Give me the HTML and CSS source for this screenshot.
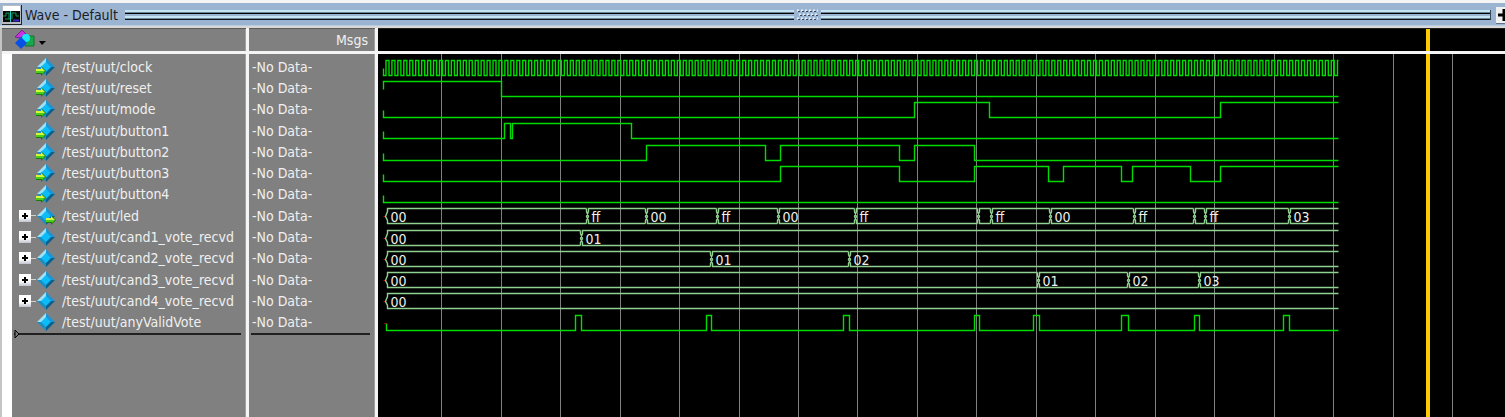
FILE: index.html
```html
<!DOCTYPE html>
<html lang="en">
<head>
<meta charset="utf-8">
<title>Wave - Default</title>
<link rel="stylesheet" href="styles.css">
</head>
<body>
<svg class="defs" aria-hidden="true">
  <symbol id="diamond" viewBox="0 0 20 20">
    <path d="M10 1 1 10 6 10 10 6z" fill="#9be2f6"/>
    <path d="M10 1 19 10 14 10 10 6z" fill="#1c93d2"/>
    <path d="M1 10 10 19 10 14 6 10z" fill="#1b8fc4"/>
    <path d="M19 10 10 19 10 14 14 10z" fill="#07618f"/>
    <path d="M10 5 15 10 10 15 5 10z" fill="#0cbcf8"/>
  </symbol>
  <symbol id="arrow" viewBox="0 0 10 10">
    <path d="M0 3H5V0L10 5 5 10V8H0z" fill="#1c7a14"/>
    <path d="M0 3H5V1L9 5H0z" fill="#d4f83c"/>
    <path d="M0 5H9L6 8V7H0z" fill="#50cc1c"/>
  </symbol>
</svg>

<header class="titlebar">
  <svg class="app-icon" viewBox="0 0 20 20" aria-hidden="true">
    <path d="M0 0H20V20H0z" fill="#222"/>
    <path d="M0 0H19V19H0z" fill="#b8bcc0"/>
    <path d="M1 1H18V6H1z" fill="#fff"/>
    <path d="M1 6H18V17H1z" fill="#050a08"/>
    <path d="M1 11H4V8H7V14M10 14V8H14V11H17M3 14H8" fill="none" stroke="#0a9a50"/>
    <path d="M8.500 6V17" stroke="#20c8c8"/>
    <path d="M11 15.500H17" stroke="#3828c8" stroke-width="2"/>
  </svg>
  <h1 class="title">Wave - Default</h1>
  <span class="groove"></span>
  <svg class="grip" viewBox="0 0 24 12" aria-hidden="true">
    <path d="M2 1.500H23M4 5.500H25M2 9.500H23" stroke="#e4f0f8" stroke-width="2" stroke-dasharray="2 2"/>
    <path d="M3 2.500H23M5 6.500H25M3 10.500H22" stroke="#3c4a5c" stroke-dasharray="2 2"/>
  </svg>
  <span class="groove groove-end"></span>
  <button class="dock" aria-label="Dock window">
    <svg class="dock-icon" viewBox="0 0 14 14" aria-hidden="true"><path d="M1 7H13M7 1V13" stroke="#000" stroke-width="3"/></svg>
  </button>
</header>

<main class="panes">
  <section class="pane names">
    <div class="head">
      <button class="filter" aria-label="Object type filter">
        <svg class="filter-icon" viewBox="0 0 32 20" aria-hidden="true">
          <path d="M1 7 8 0 13 5 6 8z" fill="#c832e0" stroke="#7a1c96"/>
          <path d="M11 6H20V16H11z" fill="#18a848" stroke="#0c7430"/>
          <circle cx="12" cy="8" r="4" fill="#14e8f4"/>
          <path d="M7 7 13 13 7 19 1 13z" fill="#0850e8"/>
          <path d="M25 11H32L28 15z" fill="#000"/>
        </svg>
      </button>
    </div>
    <div class="body">
      <ul class="rows" id="names"></ul>
      <div class="insert"><svg class="marker" viewBox="0 0 6 10" aria-hidden="true"><path d="M1 1 5 5 1 9z" fill="#777" stroke="#000"/></svg></div>
    </div>
  </section>
  <section class="pane msgs">
    <div class="head">Msgs</div>
    <div class="body">
      <ul class="rows" id="values"></ul>
      <div class="insert"></div>
    </div>
  </section>
  <section class="pane waves">
    <div class="head"><svg class="plot" id="ruler" aria-hidden="true"></svg></div>
    <div class="body"><svg class="plot" id="plot" role="img" aria-label="Signal waveforms"></svg></div>
  </section>
</main>
<script src="wave.js"></script>
</body>
</html>
```
FILE: styles.css
```css
* { box-sizing: border-box; }

body {
  margin: 0;
  min-height: 100vh;
  display: flex;
  flex-direction: column;
  overflow: hidden;
  background: #808080;
  color: #f0f0f0;
  font: 14px/16px "DejaVu Sans Condensed", Tahoma, "DejaVu Sans", sans-serif;
}

button { margin: 0; padding: 0; border: 0; background: none; display: flex; }

.defs { display: none; }

.titlebar {
  display: flex;
  align-items: center;
  height: 28px;
  padding-left: 2px;
  background: #9ab4d2;
  border-top: 3px solid #f4f4f4;
  border-bottom: 2px solid #d8d8d8;
  box-shadow: inset 0 -1px #b8cce0;
  overflow: hidden;
}

.app-icon { width: 20px; height: 20px; flex: none; }

.title {
  margin: 0 7px 0 3px;
  color: #1c1c24;
  font-size: 14px;
  font-weight: normal;
  white-space: nowrap;
}

.groove {
  flex: 1;
  height: 10px;
  background: linear-gradient(#c4e4f4 0 2px, #6c8498 2px 3px, #000 3px 4px, #9ab4d2 4px 6px, #c4e4f4 6px 8px, #6c8498 8px 9px, #101418 9px);
}
.groove-end { border-right: 1px solid #34465a; }

.grip { width: 24px; height: 12px; margin: 0 2px 0 1px; flex: none; }

.dock {
  width: 16px;
  height: 16px;
  margin: 0 -7px 0 5px;
  align-items: center;
  justify-content: center;
  flex: none;
  background: #f0f0f0;
  box-shadow: 0 1px #60708a;
}

.dock-icon { width: 14px; height: 14px; }

.panes { flex: 1; display: grid; grid-template-columns: 249px 129px 1fr; }

.pane { display: flex; flex-direction: column; min-width: 0; }

.names, .msgs { border-right: 3px solid #f4f4f4; box-shadow: inset -1px 0 #a0a0a0; }
.names { border-left: 2px solid #c4c4c4; }
.waves { background: #000; }

.head {
  display: flex;
  align-items: center;
  height: 26px;
  border-top: 1px solid #5c5c5c;
  border-bottom: 3px solid #f4f4f4;
}

.names .head { padding-left: 12px; }
.msgs .head { justify-content: flex-end; padding-right: 7px; }
.waves .head { border-top-color: #202020; }

.filter-icon { width: 32px; height: 20px; }

.body { flex: 1; padding-top: 2px; }
.names .body { border-left: 10px solid #fff; }
.waves .body { padding-top: 0; display: flex; }

.rows {
  height: 277px;
  margin: 0;
  padding: 0;
  list-style: none;
  display: grid;
  grid-template-rows: repeat(13, 1fr);
}

.row { display: flex; align-items: center; white-space: nowrap; min-height: 0; }
.msgs .row { padding-left: 3px; }

.tree { display: flex; align-items: center; width: 24px; padding-left: 7px; }

.expand {
  width: 12px;
  height: 12px;
  align-items: center;
  justify-content: center;
  background: linear-gradient(#fff 0 60%, #c0c4d0);
}

.expand-icon { width: 8px; height: 8px; }
.branch { flex: 1; height: 1px; background: #d0d0d0; }

.kind { width: 20px; height: 20px; margin-right: 6px; flex: none; }

.insert { display: flex; align-items: center; height: 2px; background: #202020; margin: 0 5px 0 2px; }
.marker { width: 6px; height: 10px; flex: none; }

.plot { display: block; width: 100%; height: 100%; min-height: 22px; flex: 1; }

.grid { stroke: #808080; }
.trace { fill: none; stroke: #00dc00; stroke-width: 1.4; }
.bus { fill: none; stroke: #90d090; stroke-width: 1.4; }
.unknown { stroke: #c80000; }
.bus-value { fill: #f0f0e8; }
.cursor { stroke: #fccc00; stroke-width: 4px; }
```
FILE: wave.js
```js
// Times are pixels after the start of the run; each signal lists its edges.
const ORIGIN = 6;
const END = 955;
const GRID_STEP = 59.45;
const PITCH = 21.25;
const TOP = 6;
const SWING = 15;
const CURSOR = 1050;

const clockEdges = [];
for (let i = 0; i < 160; i++) {
  clockEdges.push(2.5 + i * 5.945, 5.5 + i * 5.945);
}
clockEdges.push(954);

const signals = [
  { name: 'clock', port: 'in', edges: clockEdges },
  { name: 'reset', port: 'in', high: true, edges: [118] },
  { name: 'mode', port: 'in', edges: [531, 606, 837] },
  { name: 'button1', port: 'in', edges: [121, 127, 129, 248] },
  { name: 'button2', port: 'in', edges: [263, 382, 397, 516, 531, 591] },
  { name: 'button3', port: 'in', edges: [397, 516, 591, 665, 680, 738, 749, 807, 837] },
  { name: 'button4', port: 'in', edges: [] },
  { name: 'led', port: 'out', bus: [[3, '00'], [204, 'ff'], [263, '00'], [334, 'ff'], [395, '00'], [472, 'ff'], [595, ''], [608, 'ff'], [667, '00'], [751, 'ff'], [811, ''], [822, 'ff'], [906, '03']] },
  { name: 'cand1_vote_recvd', bus: [[3, '00'], [198, '01']] },
  { name: 'cand2_vote_recvd', bus: [[3, '00'], [328, '01'], [466, '02']] },
  { name: 'cand3_vote_recvd', bus: [[3, '00'], [655, '01'], [745, '02'], [816, '03']] },
  { name: 'cand4_vote_recvd', bus: [[3, '00']] },
  { name: 'anyValidVote', start: 3, edges: [192, 198, 323, 328, 460, 466, 591, 596, 650, 656, 738, 745, 811, 816, 900, 906] },
];

const plot = document.getElementById('plot');

function draw(parent, tag, attrs, text) {
  const el = document.createElementNS('http://www.w3.org/2000/svg', tag);
  for (const key in attrs) el.setAttribute(key, attrs[key]);
  if (text) el.textContent = text;
  parent.appendChild(el);
}

const px = (t) => ORIGIN + t - 0.5;

function drawTrace(s, top) {
  const bottom = top + SWING;
  let high = !!s.high;
  const start = px(s.start || 0);
  let d = `M${start} ${top + 8}V${high ? top : bottom}`;
  for (const t of s.edges) {
    high = !high;
    d += `H${px(t)}V${high ? top : bottom}`;
  }
  draw(plot, 'path', { class: 'trace', d: d + `H${px(END)}` });
  if (s.start) draw(plot, 'path', { class: 'unknown', d: `M${px(1)} ${top + 8}h2` });
}

function drawBus(s, top) {
  const bottom = top + SWING;
  const mid = top + 8;
  draw(plot, 'path', { class: 'unknown', d: `M${px(0)} ${mid}h2` });
  let d = '';
  s.bus.forEach(([t, value], i) => {
    const x = px(t);
    const next = s.bus[i + 1];
    const end = next ? px(next[0]) - 1 : px(END);
    d += `M${end} ${top}H${x + 1}V${top + 3}L${x - 1} ${mid}L${x + 1} ${bottom - 3}V${bottom}H${end}`;
    if (next) d += `M${end} ${top}V${top + 3}L${end + 2} ${mid}L${end} ${bottom - 3}V${bottom}`;
    draw(plot, 'text', { class: 'bus-value', x: x + 4, y: top + 13 }, value);
  });
  draw(plot, 'path', { class: 'bus', d });
}

for (let i = 0; i < 40; i++) {
  const x = Math.round(63.3 + i * GRID_STEP) + 0.5;
  draw(plot, 'line', { class: 'grid', x1: x, x2: x, y1: 0, y2: '100%' });
}

signals.forEach((s, i) => {
  const top = Math.floor(TOP + i * PITCH) + 0.5;
  if (s.bus) drawBus(s, top);
  else drawTrace(s, top);

  const row = document.createElement('li');
  row.className = 'row';
  const expand = s.bus
    ? `<button class="expand" aria-label="Expand ${s.name}"><svg class="expand-icon" viewBox="0 0 8 8"><path d="M1 4H7M4 1V7" stroke="#000" stroke-width="2"/></svg></button><span class="branch"></span>`
    : '';
  const arrow = s.port
    ? `<use href="#arrow" x="${s.port === 'in' ? 0 : 10}" y="9" width="10" height="10"/>`
    : '';
  row.innerHTML = `<span class="tree">${expand}</span><svg class="kind" viewBox="0 0 20 20" aria-hidden="true"><use href="#diamond" width="20" height="20"/>${arrow}</svg><span>/test/uut/${s.name}</span>`;
  document.getElementById('names').appendChild(row);

  const value = document.createElement('li');
  value.className = 'row';
  value.textContent = '-No Data-';
  document.getElementById('values').appendChild(value);
});

for (const svg of [document.getElementById('ruler'), plot]) {
  draw(svg, 'line', { class: 'cursor', x1: CURSOR, x2: CURSOR, y1: 0, y2: '100%' });
}
```
